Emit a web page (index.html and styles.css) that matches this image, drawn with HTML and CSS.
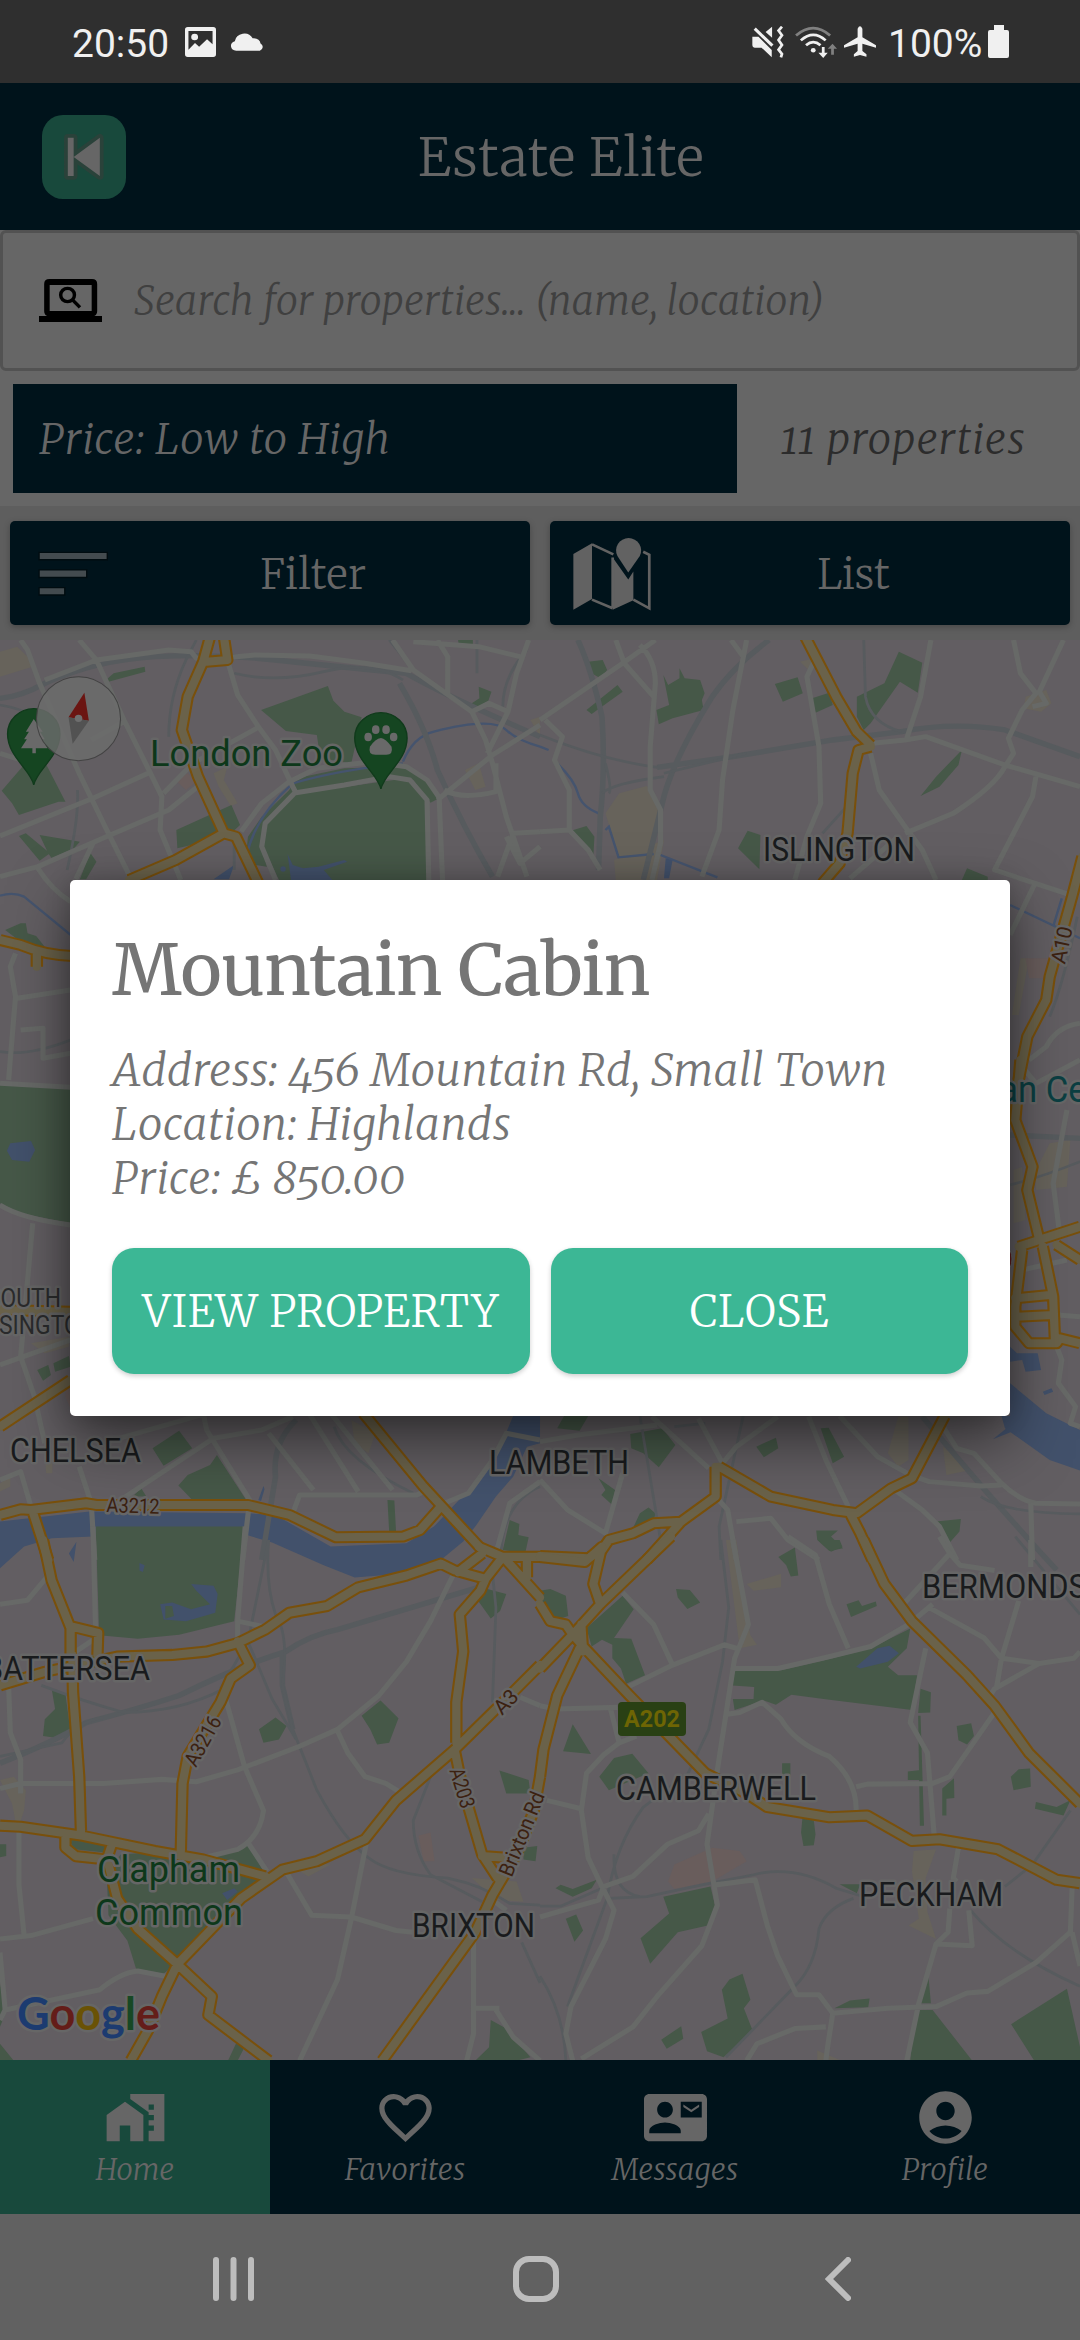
FILE: index.html
```html
<!DOCTYPE html>
<html lang="en">
<head>
<meta charset="utf-8">
<title>Estate Elite</title>
<link rel="stylesheet" href="styles.css">
</head>
<body>
<div class="screen">

<div class="status">
  <span class="status-time">20:50</span>
  <svg class="st-image" viewBox="537 78 90 90" preserveAspectRatio="none"><path fill-rule="evenodd" d="M545 78H619Q627 78 627 86V160Q627 168 619 168H545Q537 168 537 160V86Q537 78 545 78ZM547 90V146L566 126L578 137L601 115L617 130V90ZM565 98a10 10 0 1 1 0 20a10 10 0 1 1 0-20Z"/></svg>
  <svg class="st-cloud" viewBox="668 92 102 58" preserveAspectRatio="none"><path d="M686 149a17 15 0 0 1-4-29a28 28 0 0 1 52-9q20-1 23 16a12 12 0 0 1-2 22Z"/></svg>
  <svg class="st-mute" viewBox="612 76 94 96" preserveAspectRatio="none"><path d="M613 108h18l39 40v22l-30-29h-20q-7 0-7-7ZM652 94l19-16v33Z"/><path class="ln" stroke-width="9" d="M620 84l52 51"/><path class="ln" stroke-width="8" d="M700 78l-10 12 10 14-10 14 10 15-10 14 10 13-3 10"/></svg>
  <svg class="st-wifi" viewBox="738 74 122 98" preserveAspectRatio="none"><g class="ln" stroke-width="8"><path class="dim" d="M741 103Q791 58 840 103"/><path d="M755 118Q791 84 827 118"/><path d="M770 133Q791 114 812 133"/></g><circle cx="791" cy="148" r="7"/><path d="M816 138h8v18h9l-13 16-14-16h10Z"/><path fill="#808080" d="M843 162h8v-18h9l-13-16-14 16h10Z"/></svg>
  <svg class="st-plane" viewBox="879 78 94 94" preserveAspectRatio="none"><path d="M919 86q7-14 14 0v26l40 24v8l-40-12v22l12 10v7l-19-5-18 5v-7l11-10v-22l-40 12v-8l40-24Z"/></svg>
  <span class="status-pct">100%</span>
  <svg class="st-batt" viewBox="0 0 21 33"><path d="M6 0h10v5h3q2 0 2 2v24q0 2-2 2H2q-2 0-2-2V7q0-2 2-2h4Z"/></svg>
</div>

<header class="header">
  <div class="back"><svg viewBox="122 342 244 252" preserveAspectRatio="none"><path class="back-edge" d="M197 410H214V525H197ZM290 410V525L214 468Z"/><path class="back-glyph" d="M197 410H214V525H197ZM290 410V525L214 468Z"/></svg></div>
  <h1 class="title">Estate Elite</h1>
</header>

<div class="search">
  <svg class="search-icon" viewBox="113 837 183 129" preserveAspectRatio="none"><path d="M113 948h183v18H113Z"/><path fill-rule="evenodd" d="M143 837H267Q282 837 282 852V934Q282 949 267 949H143Q128 949 128 934V852Q128 837 143 837ZM144 855V933H266V855Z"/><circle cx="196" cy="885" r="20" fill="none" stroke="#000" stroke-width="10"/><path d="M209 898l23 24" stroke="#000" stroke-width="10"/></svg>
  <span class="placeholder">Search for properties... (name, location)</span>
</div>

<div class="sort">
  <div class="sort-select">Price: Low to High</div>
  <div class="sort-count">11 properties</div>
</div>

<div class="actions">
  <div class="action">
    <svg class="ic-filter" viewBox="107 540 210 140" preserveAspectRatio="none"><path class="bars-edge" d="M115 549H310V567H115ZM115 601H250V620H115ZM115 654H186V672H115Z"/></svg>
    <span class="lbl-filter">Filter</span>
  </div>
  <div class="action">
    <svg class="ic-map" viewBox="92 496 236 224" preserveAspectRatio="none">
      <path class="map-face" d="M96 550L151 518V684L96 716ZM212 560L258 626L273 602V688L212 716Z"/>
      <path class="map-line" d="M151 521L214 551M151 686L212 712M212 560V710M273 686L320 712V552L302 543"/>
      <path class="map-face" d="M258 605L226 556A37 37 0 1 1 292 556Z"/>
    </svg>
    <span class="lbl-list">List</span>
  </div>
</div>

<svg class="map" viewBox="0 640 1080 1420">
  <defs>
    <g id="minor">
      <g transform="translate(0 630) scale(.3444 .3333)"><path d="M60 30L80 60L115 160L230 430L310 600L380 745M230 30L280 90L360 270L430 415L470 500L465 600L525 750M130 150L280 90L490 60L555 65L570 85L640 85L740 75L900 78L1060 100L1195 122M0 370L60 390M0 618L270 505L430 430M0 740L110 710L320 615L490 540L580 465M110 715Q150 780 205 815M360 275L265 330M660 90L690 195L750 290L800 360L850 470L860 490M745 295L560 400L475 490M700 605L760 520L840 455L920 415L1080 395L1180 410L1240 450L1280 510M850 490L1000 465L1130 440L1190 450L1240 510L1245 750M855 490L770 580L760 650L800 750M1275 500L1285 750M1140 30L1200 120L1370 245L1410 330L1430 400L1470 560L1490 620L1530 740M1270 510L1430 375L1568 285M1290 480Q1340 510 1440 485V400M1415 370L1475 245L1500 130L1535 30M1370 245L1420 220L1475 245M1200 35L1390 50L1510 80M1270 30L1300 80V190M1568 605L1490 610L1445 740M1470 620L1510 700L1568 650M45 970L30 1010L45 1100L25 1350M50 1105L205 1080M60 1200L125 1195V1285L205 1270M270 640L220 748"/></g>
      <g transform="translate(540 630) scale(.3444 .3333)"><path d="M0 270L240 100L335 30M220 30L245 100L330 200M290 45Q335 90 335 160L320 350V480L350 540V640L325 750M15 270L65 320L42 390L85 480V600L140 660L175 720M0 605L85 600M600 30L560 240L530 450L520 600L470 740M555 30L590 80M795 95L775 140L810 350L815 520L775 620L740 750M965 340L1060 330L1120 320L1350 405L1568 470M1135 30L1105 200L1065 325M960 370L985 480L1060 590L1110 660L1150 750M1060 610L1200 550Q1320 470 1350 410L1375 370L1360 325L1400 240L1440 190L1395 130L1375 30M1520 30L1450 185L1470 220L1430 230M1440 440L1430 500L1320 720L1540 795M1435 765L1365 915M900 745L1040 620M1568 1180Q1500 1190 1470 1250L1420 1290"/></g>
      <g transform="translate(0 1060) scale(.3444 .3333)"><path d="M0 70L205 82M0 435Q60 475 205 495M95 490L60 890L100 1010L130 1150M0 915L205 840M230 1220L265 1330L275 1500M0 1260L60 1235L90 1340M350 1320L620 1135L760 1110L850 1070M590 1060L600 1110L725 1320L705 1500M780 1120L910 1290M900 1065L1040 1295M960 1060L1140 1290M850 1360L870 1305H1210L1240 1290M1290 1330L1360 1300L1430 1200L1470 1120L1568 1140M1440 1480L1480 1330L1568 1265M330 1140L600 1060"/></g>
      <g transform="translate(540 1060) scale(.3444 .3333)"><path d="M0 1145L110 1125L340 1095M325 1070L490 1225M460 1075L530 1210L570 1160L690 1070M780 1070L830 1200L895 1340M870 1068L980 1190L1075 1245L1130 1265L1280 1278L1340 1275M1170 1100L1210 1165L1260 1180L1340 1270Q1390 1320 1440 1330L1568 1332M0 1260L80 1350L190 1420L240 1240M510 1310L545 1350L570 1500M570 1385L670 1375L720 1440L810 1500M1030 1290L1110 1350L1160 1400L1210 1500M1425 1330L1430 1500M1400 630L1530 600M1530 150L1490 370L1510 530M1505 765L1568 770M1500 860L1515 900L1505 970L1555 1040L1540 1090L1568 1100M1400 20L1440 70L1568 0"/></g>
      <g transform="translate(0 1540) scale(.3444 .3381)"><path d="M0 190L80 178L140 105M270-40L278 290L220 330M712-40L690 240V300M690 240L760 255M25 430L30 570L60 650V750M0 735L60 720H300L470 708L570 715L690 680L870 610L980 560L1100 460L1180 360L1250 240L1320 95M655 470L710 670L765 800Q755 880 690 915L590 940M980 565L1010 630L1060 700L1120 720L1160 745M720 895L775 980M55 850V1020L70 1170M0 1180L90 1170L270 1120M830 980L905 1110L1020 1115L1150 1155L1200 1160M1065 890L1020 1120L980 1300L870 1540M0 1220L15 1390L0 1420M15 1390L290 1330Q350 1280 400 1275L480 1290M1375 1180V1460L1355 1540M1375 1385H1450M1440 1390L1490 1470L1568 1540M1430 1065L1470 1095M1510 465L1568 490"/></g>
      <g transform="translate(540 1540) scale(.3444 .3381)"><path d="M0 1115L170 1065L185 1025L270 995L370 900L460 860L490 810M0 490L45 500L225 495M205 500L230 600L280 580M230 600L185 635L135 690L120 800L140 940L180 1025L215 1095L190 1180L90 1380L75 1460L95 1540M20 770L120 795M240 155L330 250L385 370M255 435L385 370L535 310L570 320M560 0L605 250L565 350L515 680L485 900L515 1080L470 1200L340 1350L270 1440L120 1535M560 380H690L820 350L960 315L1070 250L1140 190M720-10L800 45L840 190L895 320M545 515L580 510L645 480L700 530Q740 600 840 640Q920 710 918 800M918 730L950 722L1140 720L1190 700L1320 510M1120 320L1075 540L1125 630L1145 880M1055 190L1190 40L1160-10M1190 40L1220 75L1320 90M1130 200L1290 290L1340 350L1450 365L1550 350L1568 330M1390 180L1340 350L1325 440M1450 365L1320 440L1300 470M1425 0V80M1215 910L1200 1000L1210 1010M1190 1090L1185 1160L1150 1195L1100 1370L1065 1540M1150 1195L1255 1200L1245 1095M1545 1030L1540 1160L1440 1250L1300 1335L1240 1340L1150 1380L1010 1385L850 1400L810 1345H745L690 1230L660 1140L625 1005L510 1020M850 1400L835 1500L830 1540M830 1440L740 1445L630 1490L600 1540M1545 1160L1568 1260"/></g>
    </g>
    <g id="major">
      <g transform="translate(0 630) scale(.3444 .3333)"><path d="M610 20L590 95L545 200L528 300L575 440L650 610L685 620L750 760M650 20L660 90L600 95M650 610L510 690L375 750M0 930L60 945Q130 975 210 978M107 975V1010"/></g>
      <g transform="translate(540 630) scale(.3444 .3333)"><path d="M770 20L860 200L920 305L960 345M960 350L925 360L908 430L893 610L870 700L820 760M1575 680L1545 800L1480 1040L1470 1110L1415 1220L1390 1350"/></g>
      <g transform="translate(0 1060) scale(.3444 .3333)"><path d="M0 1365L60 1348L90 1350L250 1330L280 1335H720L840 1365L975 1432L1170 1430L1220 1410L1280 1340M1055 1060L1230 1280L1400 1470M95 1355L140 1500M0 1100L95 1035L205 960M0 750L205 755"/></g>
      <g transform="translate(540 1060) scale(.3444 .3333)"><path d="M1395 0L1380 180L1430 320L1415 390L1450 540M1390 560L1568 500M1400 570L1380 740V800L1420 850H1500L1510 835L1568 850M1380 715L1480 705M1385 770L1490 765M1460 560L1490 710L1495 835M1500 555L1568 600M1175 1068L1080 1255L1020 1285L920 1360L850 1350L670 1310L520 1220M510 1220V1310L410 1385L310 1500M410 1385L330 1390L270 1420L200 1440L180 1470L140 1495L0 1488M900 1360L930 1420L965 1500"/></g>
      <g transform="translate(0 1540) scale(.3444 .3381)"><path d="M125 0L150 120L205 260V340M205 255L285 275L283 340M0 430L130 390L340 345L500 340L600 330L690 305L770 265L840 215L950 195L1040 140L1180 105L1280 70L1320 90L1410 115M1390 20L1460 50H1568M1400 40L1330 95M1460 50L1410 115L1395 150L1335 220L1345 330L1325 480V600M1470 60L1568 170M1530 60V110M210 340L212 450L230 700L235 860M690 300L725 370L670 410L640 480L545 640L530 720L525 920M0 845L60 848L240 875L450 920L590 945L770 995M190 880V910L220 935L310 945L325 900M315 960L340 1060L400 1150L515 1255L615 1350L605 1405L780 1540M515 1255L470 1350L430 1450L380 1540M515 1255L700 1060L820 975L920 950L1060 885L1150 770L1320 620L1460 480L1568 370M1320 620L1340 720L1400 930L1445 1000M1400 935L1470 940M1568 700L1550 800L1500 930L1430 1050L1380 1160L1110 1540"/></g>
      <g transform="translate(540 1540) scale(.3444 .3381)"><path d="M0 50L130 65L180 20L155 130L175 190M380-10L175 190L95 280L0 380M0 190L30 240L75 250L95 280L130 320L260 460L480 690L600 750L660 790L840 820L950 815L1080 890L1160 885L1330 915L1500 1005L1568 1015M115 320L50 460L10 620L0 700M120 250L125 330M940 0L1000 130L1080 240L1240 400L1320 490L1420 630L1568 780"/></g>
    </g>
    <path id="pin" d="M98 465C90 420 22 380 22 312A76 76 0 0 1 174 312C174 380 106 420 98 465Z"/>
  </defs>
  <rect class="land" y="640" width="1080" height="1420"/>

  <g transform="translate(0 630) scale(.3444 .3333)">
    <path class="shops" d="M0 65L50 50L80 80L95 110L0 140ZM620 430L660 410L650 450L690 520L670 528L635 470ZM1350 420l40-20 20 70-30 10ZM1540 270l28-10v60Z"/>
    <path class="care" d="M510 450l35-20 25 25-30 25Z"/>
    <path class="park" d="M305 152L330 130L420 110L422 125L315 155ZM758 240L952 168L968 212L1000 245L1050 262L1020 400L930 385L920 315L830 303ZM5 482L65 410L130 395L190 515H170L55 555L35 520ZM55 618L75 610L145 670L115 692ZM115 615L232 635L215 655L150 685L140 670ZM262 668L280 695L250 748H232ZM512 600L672 525L697 585L660 620L515 655ZM15 900L60 880H75L80 910L105 918L130 950L60 935ZM712 700L720 620L760 560L840 480L860 445L1000 415L1170 410L1230 445L1275 505L1250 518L1200 450L1170 440L1000 460L860 490L770 580L760 640L775 710ZM855 492L1180 445L1235 510L1245 750H810L765 650L775 580ZM1330 30H1373V50H1333ZM1390 170L1427 185L1418 212L1380 235L1370 220L1392 205Z"/>
    <path class="water" d="M835 672L850 705L880 715L925 710L1000 690L1008 695L940 720L965 750H845ZM814 717a8 8 0 1 0 16 0a8 8 0 1 0-16 0M620 748L680 705L665 748Z"/>
    <path class="stream" d="M1170 395Q1200 320 1260 305Q1430 260 1470 300Q1500 330 1568 350M0 797Q40 785 70 800L205 915M715 680Q740 560 850 460Q980 420 1170 400"/>
    <path class="rail" d="M0 205Q60 200 130 160Q280 90 450 80T800 90T1180 130Q1300 200 1568 320M1160 160Q1240 300 1270 420Q1350 600 1430 740"/>
    <path class="rail thin" d="M1130 30L1200 120Q1300 200 1370 240M490 320Q490 200 540 90L570 30M0 225Q60 235 100 260M225 480Q230 560 195 720M680 130Q800 160 940 125T1170 150M1385 30V130M1530 60Q1460 140 1460 230M680 640V720M0 1265Q80 1280 205 1230"/>
  </g>
  <g transform="translate(540 630) scale(.3444 .3333)">
    <path class="shops" d="M190 550L230 490L310 468L355 530L325 680L230 685ZM215 690L360 630L340 750H220ZM1410 200l60-20 15 40-30 25-50-10ZM1395 985l25 0-30 170-20 0ZM755 95l40-10-15 35Z"/>
    <path class="care" d="M1410 985h80l-20 60h-50Z"/>
    <path class="park" d="M140 95L182 90L195 120L175 145L150 130ZM135 240L225 165L240 185L150 252ZM358 135L372 165L405 145V115L420 145L465 150L478 190L470 210L475 240L385 265L345 283L338 240L375 225ZM682 162L748 142L763 190L705 215ZM790 205L840 188L850 225L800 248ZM920 200L1000 160L1042 65L1110 98L1097 188L1045 155L960 280L940 300L920 260ZM1225 360L1215 405L1160 470L1105 498L1150 440ZM90 602L135 588L158 620L155 678ZM603 602L640 615L637 718L600 680L575 655ZM1240 715L1300 740V750H1225Z"/>
    <path class="water" d="M365 685L385 690L375 745H360Z"/>
    <path class="stream" d="M0 350L25 360M50 400Q100 450 110 490T170 550M190 600L200 590L228 682L330 672M350 675L515 742M1365 825L1568 925M1515 805L1490 890"/>
    <path class="rail" d="M110 30Q150 120 180 260Q190 420 175 560L170 720M665 30Q560 110 500 200Q380 400 355 520L300 750M340 412L560 380L850 330L1050 305Q1200 275 1350 300L1568 380"/>
    <path class="rail thin" d="M0 315Q180 390 340 412M180 490Q210 460 360 440M940 30L945 200Q960 280 1050 305M190 400Q210 480 200 490M360 430L600 370M820 610L890 530M1560 860Q1520 1060 1480 1160"/>
  </g>
  <g transform="translate(0 1060) scale(.3444 .3333)">
    <path class="shops" d="M90 850L200 830V860L130 880ZM1020 1080L1090 1120L1070 1180L1030 1150ZM130 1180l22 0v60h-18ZM0 1270l30-20v30l-30 15Z"/>
    <path class="care" d="M190 970l15 0v60l40 30-30 10-25-60Z"/>
    <path class="park" d="M0 75L205 85V490L60 460L0 430ZM443 1165L520 1112L558 1165L475 1217ZM630 1185L715 1320L560 1322L518 1277L545 1245L610 1215ZM108 930L140 915L148 945L125 962ZM155 910L200 888L205 920L160 935ZM385 1310L410 1285L425 1310ZM1125 1320L1145 1322L1150 1415H1130ZM1480 1380L1508 1392L1505 1425L1535 1432L1525 1480L1460 1470Z"/>
    <path class="water" d="M30 250L90 243L102 270L85 305L35 300L20 272ZM0 1385L260 1355L720 1360L800 1365L960 1460L1180 1450L1260 1400L1360 1290L1440 1190L1490 1068H1568V1150L1530 1160L1490 1250L1440 1310L1380 1400L1345 1445L1280 1500L1180 1540L1030 1553L940 1516L790 1448L700 1420L270 1430L150 1435L70 1460L0 1525ZM765 1278l3 10-10 35-8-3Z"/>
    <path class="rail" d="M860 1080Q790 1150 800 1250L760 1500"/>
    <path class="rail thin" d="M970 1100Q1000 1200 1200 1300M1455 1480Q1460 1330 1568 1280"/>
  </g>
  <g transform="translate(540 1060) scale(.3444 .3333)">
    <path class="shops" d="M1375 330L1400 320L1410 480L1375 490ZM1480 250L1540 240L1530 380L1440 390V330ZM1040 1070H1070V1200L1040 1220L1010 1180ZM1170 1160L1250 1230L1180 1245Z"/>
    <path class="park" d="M70 1068H140L115 1112L50 1105ZM262 1122L355 1105L393 1155L345 1222L300 1180L265 1165ZM628 1160L685 1133L692 1165L650 1192ZM815 1105L838 1103L883 1190L850 1210ZM170 1255L218 1290L210 1335L178 1305L190 1290ZM272 1400L290 1360L315 1343L335 1360L330 1385ZM1150 1385L1222 1377L1218 1415L1188 1450ZM802 1412H865L845 1430L880 1465L840 1473L805 1440Z"/>
    <path class="water" d="M1365 970L1470 1060L1568 1110V1232L1480 1200L1350 1105L1340 1068H1365ZM1365 860L1385 880H1445L1455 930L1410 935L1400 900L1365 905ZM1460 995L1485 985L1490 995L1465 1005ZM1315 1138L1360 1100L1370 1115Z"/>
    <path class="rail" d="M1365 225L1568 235M1110 1070L1300 1300L1420 1440L1500 1530"/>
    <path class="rail thin" d="M1280 1310Q1350 1360 1568 1362M290 1068L350 1440M590 1068L520 1400L525 1500M1365 375Q1460 350 1568 305M390 1100L480 1090"/>
  </g>
  <g transform="translate(0 1540) scale(.3444 .3381)">
    <path class="shops" d="M0 710L40 700L75 740L70 800L50 860L35 780ZM1370 1000L1500 1010L1520 1070L1440 1065ZM870 980l50-25 40 5-65 35Z"/>
    <path class="care" d="M1215 875L1250 865L1262 950H1230Z"/>
    <path class="park" d="M278-40H710L680 240L520 280L400 292L288 282ZM150 440L190 455L205 570L160 585L125 580L130 530L160 500ZM752 560L800 525L832 550L810 590L765 600ZM1050 520L1105 475L1157 527L1130 600L1095 605L1075 560ZM1385 175L1415 145L1470 160L1452 210L1425 232ZM1450 682L1475 690L1535 710L1540 750H1470ZM200 885L320 895L310 925L215 915ZM350 930L420 925L600 945L720 897L765 980L720 1060L520 1245L475 1283L395 1268L370 1185L315 1110L310 990ZM0 900H18V935L0 938ZM0 1310L18 1395L0 1440ZM685 1490L710 1500L690 1540H662ZM1425 1420L1470 1445L1540 1530L1500 1540H1380L1420 1500ZM1520 910L1560 905L1555 950L1520 945ZM0 1490L40 1540H0Z"/>
    <path class="water" fill-rule="evenodd" d="M465 190L500 185L555 205L610 190L570 150L555 130L620 135L632 160L625 215L540 240L475 235ZM480 195h20l5 30-25 8ZM405 68L420 75L415 95L405 90ZM645 1045L680 1030L690 1040L660 1065ZM222 5l-8 60-14-25Z"/>
    <path class="rail" d="M0 660Q150 600 250 540Q400 500 520 460Q700 370 830 330Q900 280 980 265L1390 140M820 330V430L850 560"/>
    <path class="rail thin" d="M0 640L180 600Q220 540 300 525M120 430Q250 480 360 510Q520 510 650 440M780 0L720 300L640 440M780 0Q770 130 800 220Q840 280 820 430L850 560L920 740Q1000 890 1070 940Q1130 990 1300 1000Q1400 1020 1480 1075L1568 1080M720 300L790 470L860 590M1430 100L1440 200L1430 480M1250 700L1200 830Q1200 920 1250 990L1400 1070M1515 1190L1568 1310"/>
  </g>
  <g transform="translate(540 1540) scale(.3444 .3381)">
    <path class="shops" d="M540 0H570L610 280L630 310L580 320ZM600 130L700 100V140L620 150ZM1085 920L1150 915L1120 1000L1125 1100L1150 1180L1070 1140L1100 1120L1080 980ZM805 1510l70 30h-70Z"/>
    <path class="care" d="M372 1010L390 960L500 910L580 920L600 950L500 1010L390 1032Z"/>
    <path class="park" d="M0 150L30 145L75 165L82 225L50 235L10 200ZM240 165L272 205L215 290L265 292L305 400L250 425L235 380L210 350V310L180 295L150 315L135 260ZM395 145L435 148L465 185L428 204L400 170ZM95 545L148 633L67 625ZM172 700L215 645L268 632L315 690L200 740ZM692 50L740 22L750 105L728 108L715 75ZM808 0H870L878 20L845 35ZM890 190L925 178L935 195L975 182L978 195L903 228ZM562 382L700 385L850 350L960 320L1075 262L1065 320L1010 375L1040 400H1095L1080 503L835 472L730 458L685 487L650 475L565 503L560 470H620L622 435L560 430ZM1105 440L1135 450L1133 510L1098 512ZM1098 520H1105L1115 845H1103ZM1068 685L1105 680L1110 710H1068ZM1168 735L1202 705L1203 763L1180 765V815H1168ZM1210 550L1252 542L1260 580L1240 605L1215 592ZM1367 700L1390 678L1423 676L1425 730L1375 740ZM1440 775L1500 790L1540 770L1520 815L1437 795ZM703 660H727V700H703ZM762 822L795 830L800 870L795 903L765 905L758 865ZM45 1030L60 1020L95 1032L165 1005L150 1030L95 1055ZM75 1120L105 1108L125 1155L100 1188ZM358 1055L495 1025L508 1080L487 1140L400 1160L320 1253L292 1178L375 1105ZM528 1330L550 1300L588 1283L611 1360L592 1385L617 1450L533 1530L485 1512L468 1455L545 1415ZM352 1478L410 1438L416 1475L368 1505ZM855 1385L900 1362L957 1356L953 1382ZM870 1018H930L920 1045ZM1127 1280L1135 1370H1098ZM1090 1390H1140L1255 1540H1075ZM1368 1432L1530 1327L1568 1500V1540H1435Z"/>
    <path class="water" d="M918 375L980 320L1015 313L1042 335L1010 360L930 380Z"/>
    <path class="rail thin" d="M525 0L548 200L530 360L490 560L430 690L300 790Q220 900 195 1060L80 1380M0 1083H60L180 1030M200 1060L310 1055L470 1020L620 990Q740 960 860 1030L940 1055M215 930Q210 1040 290 1055M910 1060Q830 1090 810 1150Q800 1260 740 1320L540 1530M0 1290Q70 1400 75 1540M1250 1095Q1350 1220 1568 1320M1540 800L1430 960L1350 1025M1380-10L1568 220"/>
  </g>

  <use href="#minor" class="minor"/>
  <use href="#major" class="major-edge"/>
  <use href="#major" class="major-fill"/>

  <g transform="translate(0 630) scale(.3444 .3333)">
    <use href="#pin" class="pin"/>
    <path class="pin-mark" d="M98 267L124 305H116L130 328H122L138 355H104V370H94V355H61L78 328H70L84 305H75Z"/>
    <use href="#pin" class="pin" x="1008" y="12"/>
    <g class="pin-mark"><ellipse cx="1069" cy="321" rx="11" ry="13"/><ellipse cx="1091" cy="299" rx="11" ry="13"/><ellipse cx="1121" cy="299" rx="11" ry="13"/><ellipse cx="1143" cy="321" rx="11" ry="13"/><path d="M1106 324Q1120 326 1137 350Q1142 374 1122 374H1090Q1068 374 1074 350Q1090 326 1106 324Z"/></g>
    <ellipse class="compass" cx="228" cy="266" rx="122" ry="126"/>
    <path fill="#6b1512" d="M245 188L258 272L199 262Z"/><path fill="#525252" d="M199 262L258 272L211 341Z"/><circle cx="228" cy="265" r="11" fill="#6e6e6e"/>
  </g>
  <ellipse cx="1006" cy="1259" rx="6" ry="12" fill="#5d1c1b" stroke="#6a6a6a"/>

  <g class="place">
    <text x="763" y="861" textLength="152" lengthAdjust="spacingAndGlyphs">ISLINGTON</text>
    <text x="10" y="1462" textLength="131" lengthAdjust="spacingAndGlyphs">CHELSEA</text>
    <text x="489" y="1474" textLength="140" lengthAdjust="spacingAndGlyphs">LAMBETH</text>
    <text x="922" y="1598" textLength="201" lengthAdjust="spacingAndGlyphs">BERMONDSEY</text>
    <text x="-16" y="1680" textLength="166" lengthAdjust="spacingAndGlyphs">BATTERSEA</text>
    <text x="412" y="1937" textLength="123" lengthAdjust="spacingAndGlyphs">BRIXTON</text>
    <text x="616" y="1800" textLength="200" lengthAdjust="spacingAndGlyphs">CAMBERWELL</text>
    <text x="859" y="1906" textLength="144" lengthAdjust="spacingAndGlyphs">PECKHAM</text>
  </g>
  <g class="place small">
    <text x="-13" y="1307" textLength="74" lengthAdjust="spacingAndGlyphs">SOUTH</text>
    <text x="-1" y="1334" textLength="97" lengthAdjust="spacingAndGlyphs">SINGTON</text>
  </g>
  <g class="green">
    <text x="150" y="766" textLength="193" lengthAdjust="spacingAndGlyphs">London Zoo</text>
    <text x="97" y="1882" textLength="143" lengthAdjust="spacingAndGlyphs">Clapham</text>
    <text x="95" y="1925" textLength="148" lengthAdjust="spacingAndGlyphs">Common</text>
    <text class="teal" x="999" y="1102" textLength="148" lengthAdjust="spacingAndGlyphs">an Centre</text>
  </g>
  <g class="road">
    <text transform="translate(1062 945) rotate(-78)" y="7">A10</text>
    <text transform="translate(133 1506) rotate(2)" y="7" textLength="53" lengthAdjust="spacingAndGlyphs">A3212</text>
    <text transform="translate(203 1741) rotate(-61)" y="7" textLength="54" lengthAdjust="spacingAndGlyphs">A3216</text>
    <text transform="translate(506 1702) rotate(-45)" y="7">A3</text>
    <text transform="translate(462 1788) rotate(73)" y="7" textLength="41" lengthAdjust="spacingAndGlyphs">A203</text>
    <text transform="translate(522 1834) rotate(-68)" y="7" textLength="89" lengthAdjust="spacingAndGlyphs">Brixton Rd</text>
  </g>
  <rect x="618" y="1702" width="68" height="34" rx="4" fill="#294014"/>
  <text class="shield" x="624" y="1727" textLength="56" lengthAdjust="spacingAndGlyphs">A202</text>
  <text class="google" x="17" y="2030" textLength="143" lengthAdjust="spacingAndGlyphs"><tspan fill="#1c3b70">G</tspan><tspan fill="#641d19">o</tspan><tspan fill="#6a5205">o</tspan><tspan fill="#1c3b70">g</tspan><tspan fill="#174824">l</tspan><tspan fill="#641d19">e</tspan></text>
</svg>

<nav class="tabs">
  <div class="tab active"><svg viewBox="0 0 24 24"><path d="M1 11v10h5v-6h4v6h5V11L8 6z"/><path d="M10 3v1.97l7 5V11h2v2h-2v2h2v2h-2v4h6V3H10zm9 6h-2V7h2v2z"/></svg><span>Home</span></div>
  <div class="tab"><svg viewBox="0 0 24 24"><path d="M16.5 3c-1.74 0-3.41.81-4.5 2.09C10.91 3.81 9.24 3 7.5 3 4.42 3 2 5.42 2 8.5c0 3.78 3.4 6.86 8.55 11.54L12 21.35l1.45-1.32C18.6 15.36 22 12.28 22 8.5 22 5.42 19.58 3 16.5 3zm-4.4 15.55l-.1.1-.1-.1C7.14 14.24 4 11.39 4 8.5 4 6.5 5.5 5 7.5 5c1.54 0 3.04.99 3.57 2.36h1.87C13.46 5.99 14.96 5 16.5 5c2 0 3.5 1.5 3.5 3.5 0 2.89-3.14 5.74-7.9 10.05z"/></svg><span>Favorites</span></div>
  <div class="tab"><svg viewBox="0 0 24 24"><path d="M21 8V7l-3 2-3-2v1l3 2 3-2zm1-5H2C.9 3 0 3.9 0 5v14c0 1.1.9 2 2 2h20c1.1 0 1.99-.9 1.99-2L24 5c0-1.1-.9-2-2-2zM8 6c1.66 0 3 1.34 3 3s-1.34 3-3 3-3-1.34-3-3 1.34-3 3-3zm6 12H2v-1c0-2 4-3.1 6-3.1s6 1.1 6 3.1v1zm8-6h-8V6h8v6z"/></svg><span>Messages</span></div>
  <div class="tab"><svg viewBox="0 0 24 24"><path d="M12 2C6.48 2 2 6.48 2 12s4.48 10 10 10 10-4.48 10-10S17.52 2 12 2zm0 4c1.93 0 3.5 1.57 3.5 3.5S13.93 13 12 13s-3.5-1.57-3.5-3.5S10.07 6 12 6zm0 14c-2.03 0-4.43-.82-6.14-2.88C7.55 15.8 9.68 15 12 15s4.45.8 6.14 2.12C16.43 19.18 14.03 20 12 20z"/></svg><span>Profile</span></div>
</nav>

<div class="sysnav">
  <svg width="42" height="44" viewBox="0 0 42 44"><path d="M4 3V41M21.5 3V41M39 3V41"/></svg>
  <svg width="46" height="46" viewBox="0 0 46 46"><rect x="3" y="3" width="40" height="40" rx="13"/></svg>
  <svg class="sys-back" width="26" height="44" viewBox="0 0 26 44"><path d="M23 3L4 22L23 41"/></svg>
</div>

<div class="dialog">
  <h2 class="dialog-title">Mountain Cabin</h2>
  <div class="details">
    <div>Address: 456 Mountain Rd, Small Town</div>
    <div>Location: Highlands</div>
    <div>Price: £ 850.00</div>
  </div>
  <div class="buttons">
    <div class="btn">VIEW PROPERTY</div>
    <div class="btn">CLOSE</div>
  </div>
</div>

</div>
</body>
</html>
```
FILE: styles.css
```css
* { box-sizing: border-box; }
body { margin: 0; }
.screen {
  position: relative;
  display: flex;
  flex-direction: column;
  width: 1080px;
  height: 2340px;
  overflow: hidden;
  background: #666;
  color: #666;
  font-family: Merriweather, "Liberation Serif", serif;
  font-weight: 300;
  font-variant-numeric: oldstyle-nums;
  white-space: nowrap;
}
svg { display: block; flex: none; }

/* Status bar */
.status {
  display: flex;
  align-items: center;
  height: 83px;
  padding: 0 71px 0 72px;
  background: #2f2f2f;
  color: #f0f0f0;
  font: 39px/46px Roboto, sans-serif;
}
.status svg { fill: #f0f0f0; }
.status span { position: relative; top: 2px; }
.status .ln { fill: none; stroke: #f0f0f0; }
.status .dim { stroke: #808080; }
.status-time { width: 113px; }
.st-image { width: 31px; height: 30px; }
.st-cloud { width: 35px; height: 19px; margin-left: 14px; }
.st-mute { width: 32px; height: 32px; margin-left: auto; }
.st-wifi { width: 42px; height: 32px; margin-left: 11px; }
.st-plane { width: 32px; height: 31px; margin-left: 7px; }
.status-pct { width: 100px; margin-left: 12px; }
.st-batt { width: 21px; height: 33px; }

/* Header */
.header {
  display: flex;
  align-items: center;
  height: 147px;
  padding: 0 84px 0 42px;
  background: #00131b;
}
.back { width: 84px; height: 84px; border-radius: 21px; background: #18493c; }
.back svg { width: 84px; height: 84px; }
.back-edge { fill: #2a423a; stroke: #2a423a; stroke-width: 22; stroke-linejoin: round; }
.back-glyph { fill: #666; }
.title { flex: 1; margin: 0; text-align: center; font-size: 53px; font-weight: 300; letter-spacing: 0.7px; }

/* Search and sorting */
.search {
  display: flex;
  align-items: center;
  height: 141px;
  padding-left: 36px;
  border: 3px solid #525252;
  border-radius: 6px;
}
.search-icon { width: 63px; height: 43px; }
.placeholder { margin-left: 32px; color: #404040; font-size: 39.4px; font-style: italic; letter-spacing: 0.35px; }
.sort { display: flex; align-items: center; height: 135px; padding-left: 13px; font-size: 42px; font-style: italic; letter-spacing: 0.8px; }
.sort-select { width: 724px; height: 109px; padding: 1px 0 0 26px; background: #00131b; line-height: 109px; }
.sort-count { flex: 1; padding-right: 10px; color: #2c2c2c; text-align: center; letter-spacing: 1.2px; }
.actions { display: flex; gap: 20px; height: 134px; padding: 15px 10px; background: #5e5e5e; }
.action {
  display: flex;
  flex: 1;
  align-items: center;
  height: 104px;
  border-radius: 5px;
  background: #00131b;
  box-shadow: 0 2px 6px rgba(0, 0, 0, 0.25);
  font-size: 41px;
}
.action span { flex: 1; padding-top: 2px; text-align: center; }
.ic-filter { width: 72px; height: 47px; margin-left: 27px; }
.bars-edge { fill: #434b4f; stroke: #000c10; stroke-width: 8; paint-order: stroke; }
.ic-map { width: 80px; height: 75px; margin-left: 22px; }
.map-face { fill: #626262; }
.map-line { fill: none; stroke: #626262; stroke-width: 8; }
.action .lbl-filter { padding-right: 12px; letter-spacing: 0.7px; }
.action .lbl-list { padding-right: 15px; }

/* Map */
.map { width: 1080px; height: 1420px; font-variant-numeric: normal; }
.land { fill: #625e62; }
.park { fill: #465848; }
.water { fill: #42516b; }
.shops { fill: #67635b; }
.care { fill: #695d5c; }
.stream { fill: none; stroke: #45546e; stroke-width: 7; }
.rail { fill: none; stroke: #575b5e; stroke-width: 16; }
.rail.thin { stroke-width: 8; }
.minor { fill: none; stroke: #676967; stroke-width: 15; stroke-linejoin: round; }
.major-edge { fill: none; stroke: #79500b; stroke-width: 36; stroke-linejoin: round; }
.major-fill { fill: none; stroke: #6a624a; stroke-width: 24; stroke-linejoin: round; stroke-linecap: round; }
.pin { fill: #154521; stroke: #103a1b; stroke-width: 4; }
.pin-mark { fill: #696969; }
.compass { fill: rgba(108, 108, 108, 0.82); stroke: #434343; stroke-width: 3; }
.map text { font-family: Roboto, sans-serif; font-weight: 400; paint-order: stroke; stroke: #666; stroke-width: 5px; stroke-linejoin: round; }
.place { fill: #191b1d; font-size: 33px; }
.place.small { fill: #2a2b2c; font-size: 25px; }
.green { fill: #0d381a; font-size: 37px; }
.green .teal { fill: #0b3f42; }
.road { fill: #3c2110; font-size: 21px; text-anchor: middle; }
.map .shield { fill: #6e6504; stroke: none; font-size: 24px; font-weight: 700; }
.map .google { font-family: Lato, sans-serif; font-size: 46px; font-weight: 700; }

/* Bottom tabs */
.tabs { display: flex; height: 154px; background: #00131b; }
.tab {
  display: flex;
  flex: 1;
  flex-direction: column;
  align-items: center;
  padding-top: 26px;
  font-size: 29.4px;
  font-style: italic;
  line-height: 41px;
  letter-spacing: 0.2px;
}
.tab.active { background: #18493c; }
.tab svg { width: 63px; height: 63px; fill: #666; }

/* System navigation */
.sysnav { display: flex; align-items: center; height: 126px; padding: 4px 0 0 212px; background: #616161; }
.sysnav svg { fill: none; stroke: #bdbdbd; stroke-width: 6; stroke-linecap: round; }
.sysnav svg + svg { margin-left: 259px; }
.sysnav svg.sys-back { margin-left: 266px; }

/* Property dialog */
.dialog {
  position: absolute;
  top: 880px;
  left: 70px;
  width: 940px;
  height: 536px;
  padding: 42px;
  border-radius: 5px;
  background: #fff;
  color: #757575;
  box-shadow: 0 24px 60px rgba(0, 0, 0, 0.5), 0 0 24px rgba(0, 0, 0, 0.18);
}
.dialog-title { margin: 0; padding-top: 2px; font-size: 70.5px; font-weight: 400; line-height: 92px; letter-spacing: -0.7px; }
.details { margin-top: 28px; font-size: 43.8px; font-style: italic; line-height: 54px; letter-spacing: 0.55px; }
.buttons { display: flex; gap: 21px; margin-top: 42px; }
.btn {
  flex: 1;
  height: 126px;
  border-radius: 22px;
  background: #3cb795;
  box-shadow: 0 2px 5px rgba(0, 0, 0, 0.2);
  color: #fff;
  font-size: 43px;
  line-height: 128px;
  letter-spacing: 0.7px;
  text-align: center;
}
```
